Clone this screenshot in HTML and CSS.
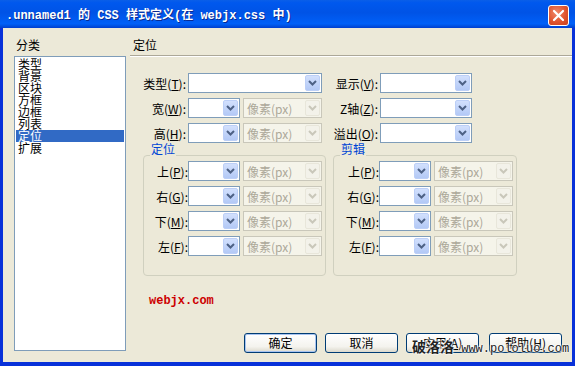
FILE: index.html
```html
<!DOCTYPE html>
<html lang="zh-CN">
<head>
    <meta charset="UTF-8">
    <title>CSS 样式定义</title>
    <link rel="stylesheet" href="styles.css">
</head>
<body>
<div class="window">
    <div class="titlebar">
        <span class="title">.unnamed1 的 CSS 样式定义(在 webjx.css 中)</span>
        <span class="close">
            <svg width="13" height="13" viewBox="0 0 13 13"><path d="M2 2 L11 11 M11 2 L2 11" stroke="#fff" stroke-width="2.2" stroke-linecap="round"/></svg>
        </span>
    </div>
    <div class="client">
        <div class="cat">
            <div class="cat-label">分类</div>
            <ul class="list">
                <li>类型</li>
                <li>背景</li>
                <li>区块</li>
                <li>方框</li>
                <li>边框</li>
                <li>列表</li>
                <li class="sel">定位</li>
                <li>扩展</li>
            </ul>
        </div>
        <div class="panel">
            <div class="panel-head">定位</div>

            <div class="rows">
                <div class="row">
                    <label class="lbl">类型(<u>T</u>):</label>
                    <div class="select wide"><span class="arrow"><svg width="9" height="6" viewBox="0 0 9 6"><path d="M1 1 L4.5 4.5 L8 1" fill="none" stroke="#4d6185" stroke-width="2"/></svg></span></div>
                    <label class="lbl lbl-r">显示(<u>V</u>):</label>
                    <div class="select right"><span class="arrow"><svg width="9" height="6" viewBox="0 0 9 6"><path d="M1 1 L4.5 4.5 L8 1" fill="none" stroke="#4d6185" stroke-width="2"/></svg></span></div>
                </div>
                <div class="row">
                    <label class="lbl">宽(<u>W</u>):</label>
                    <div class="select small"><span class="arrow"><svg width="9" height="6" viewBox="0 0 9 6"><path d="M1 1 L4.5 4.5 L8 1" fill="none" stroke="#4d6185" stroke-width="2"/></svg></span></div>
                    <div class="select unit off"><span class="val">像素(px)</span><span class="arrow"><svg width="9" height="6" viewBox="0 0 9 6"><path d="M1 1 L4.5 4.5 L8 1" fill="none" stroke="#c9c7ba" stroke-width="2"/></svg></span></div>
                    <label class="lbl lbl-r">Z轴(<u>Z</u>):</label>
                    <div class="select right"><span class="arrow"><svg width="9" height="6" viewBox="0 0 9 6"><path d="M1 1 L4.5 4.5 L8 1" fill="none" stroke="#4d6185" stroke-width="2"/></svg></span></div>
                </div>
                <div class="row">
                    <label class="lbl">高(<u>H</u>):</label>
                    <div class="select small"><span class="arrow"><svg width="9" height="6" viewBox="0 0 9 6"><path d="M1 1 L4.5 4.5 L8 1" fill="none" stroke="#4d6185" stroke-width="2"/></svg></span></div>
                    <div class="select unit off"><span class="val">像素(px)</span><span class="arrow"><svg width="9" height="6" viewBox="0 0 9 6"><path d="M1 1 L4.5 4.5 L8 1" fill="none" stroke="#c9c7ba" stroke-width="2"/></svg></span></div>
                    <label class="lbl lbl-r">溢出(<u>O</u>):</label>
                    <div class="select right"><span class="arrow"><svg width="9" height="6" viewBox="0 0 9 6"><path d="M1 1 L4.5 4.5 L8 1" fill="none" stroke="#4d6185" stroke-width="2"/></svg></span></div>
                </div>
            </div>

            <div class="groups">
                <div class="group">
                    <span class="legend">定位</span>
                    <div class="grow"><label class="glbl">上(<u>P</u>):</label><div class="select small"><span class="arrow"><svg width="9" height="6" viewBox="0 0 9 6"><path d="M1 1 L4.5 4.5 L8 1" fill="none" stroke="#4d6185" stroke-width="2"/></svg></span></div><div class="select unit off"><span class="val">像素(px)</span><span class="arrow"><svg width="9" height="6" viewBox="0 0 9 6"><path d="M1 1 L4.5 4.5 L8 1" fill="none" stroke="#c9c7ba" stroke-width="2"/></svg></span></div></div>
                    <div class="grow"><label class="glbl">右(<u>G</u>):</label><div class="select small"><span class="arrow"><svg width="9" height="6" viewBox="0 0 9 6"><path d="M1 1 L4.5 4.5 L8 1" fill="none" stroke="#4d6185" stroke-width="2"/></svg></span></div><div class="select unit off"><span class="val">像素(px)</span><span class="arrow"><svg width="9" height="6" viewBox="0 0 9 6"><path d="M1 1 L4.5 4.5 L8 1" fill="none" stroke="#c9c7ba" stroke-width="2"/></svg></span></div></div>
                    <div class="grow"><label class="glbl">下(<u>M</u>):</label><div class="select small"><span class="arrow"><svg width="9" height="6" viewBox="0 0 9 6"><path d="M1 1 L4.5 4.5 L8 1" fill="none" stroke="#4d6185" stroke-width="2"/></svg></span></div><div class="select unit off"><span class="val">像素(px)</span><span class="arrow"><svg width="9" height="6" viewBox="0 0 9 6"><path d="M1 1 L4.5 4.5 L8 1" fill="none" stroke="#c9c7ba" stroke-width="2"/></svg></span></div></div>
                    <div class="grow"><label class="glbl">左(<u>F</u>):</label><div class="select small"><span class="arrow"><svg width="9" height="6" viewBox="0 0 9 6"><path d="M1 1 L4.5 4.5 L8 1" fill="none" stroke="#4d6185" stroke-width="2"/></svg></span></div><div class="select unit off"><span class="val">像素(px)</span><span class="arrow"><svg width="9" height="6" viewBox="0 0 9 6"><path d="M1 1 L4.5 4.5 L8 1" fill="none" stroke="#c9c7ba" stroke-width="2"/></svg></span></div></div>
                </div>
                <div class="group g2">
                    <span class="legend">剪辑</span>
                    <div class="grow"><label class="glbl">上(<u>P</u>):</label><div class="select small"><span class="arrow"><svg width="9" height="6" viewBox="0 0 9 6"><path d="M1 1 L4.5 4.5 L8 1" fill="none" stroke="#4d6185" stroke-width="2"/></svg></span></div><div class="select unit off"><span class="val">像素(px)</span><span class="arrow"><svg width="9" height="6" viewBox="0 0 9 6"><path d="M1 1 L4.5 4.5 L8 1" fill="none" stroke="#c9c7ba" stroke-width="2"/></svg></span></div></div>
                    <div class="grow"><label class="glbl">右(<u>G</u>):</label><div class="select small"><span class="arrow"><svg width="9" height="6" viewBox="0 0 9 6"><path d="M1 1 L4.5 4.5 L8 1" fill="none" stroke="#4d6185" stroke-width="2"/></svg></span></div><div class="select unit off"><span class="val">像素(px)</span><span class="arrow"><svg width="9" height="6" viewBox="0 0 9 6"><path d="M1 1 L4.5 4.5 L8 1" fill="none" stroke="#c9c7ba" stroke-width="2"/></svg></span></div></div>
                    <div class="grow"><label class="glbl">下(<u>M</u>):</label><div class="select small"><span class="arrow"><svg width="9" height="6" viewBox="0 0 9 6"><path d="M1 1 L4.5 4.5 L8 1" fill="none" stroke="#4d6185" stroke-width="2"/></svg></span></div><div class="select unit off"><span class="val">像素(px)</span><span class="arrow"><svg width="9" height="6" viewBox="0 0 9 6"><path d="M1 1 L4.5 4.5 L8 1" fill="none" stroke="#c9c7ba" stroke-width="2"/></svg></span></div></div>
                    <div class="grow"><label class="glbl">左(<u>F</u>):</label><div class="select small"><span class="arrow"><svg width="9" height="6" viewBox="0 0 9 6"><path d="M1 1 L4.5 4.5 L8 1" fill="none" stroke="#4d6185" stroke-width="2"/></svg></span></div><div class="select unit off"><span class="val">像素(px)</span><span class="arrow"><svg width="9" height="6" viewBox="0 0 9 6"><path d="M1 1 L4.5 4.5 L8 1" fill="none" stroke="#c9c7ba" stroke-width="2"/></svg></span></div></div>
                </div>
            </div>

            <div class="brand">webjx.com</div>

            <div class="buttons">
                <button class="btn default">确定</button>
                <button class="btn">取消</button>
                <button class="btn">应用(<u>A</u>)</button>
                <button class="btn last">帮助(<u>H</u>)</button>
            </div>
        </div>
    </div>
    <div class="watermark"><b>破洛洛</b> www.pololuo.com</div>
</div>
</body>
</html>
```

FILE: styles.css
```css
body {
    margin: 0;
    font-family: "Noto Sans CJK SC", "Liberation Sans", sans-serif;
    font-size: 12px;
    color: #000;
    background: #fff;
}
.window {
    position: relative;
    width: 575px;
    height: 366px;
    background: #0831d9;
    overflow: hidden;
}
.titlebar {
    height: 28px;
    display: flex;
    align-items: center;
    justify-content: space-between;
    padding: 0 6px;
    box-sizing: border-box;
    background: linear-gradient(#0a5fe8 0, #0058ee 10%, #0053e6 45%, #0060f8 85%, #0050e0 93%, #003ed0 100%);
}
.title {
    color: #fff;
    font-family: "Liberation Mono", "Noto Sans CJK SC", monospace;
    font-weight: bold;
    font-size: 12px;
    text-shadow: 1px 1px 0 #0a2a90;
    white-space: pre;
}
.close {
    width: 19px;
    height: 19px;
    border: 1px solid #fff;
    border-radius: 3px;
    background: radial-gradient(circle at 40% 35%, #f08a6c 0, #e0542e 55%, #c8401c 100%);
    display: flex;
    align-items: center;
    justify-content: center;
    margin-top: 2px;
}
.client {
    position: absolute;
    left: 3px;
    top: 28px;
    width: 569px;
    height: 334px;
    background: #ece9d8;
    display: flex;
}
.cat {
    margin-left: 11px;
    width: 112px;
}
.cat-label {
    padding: 11px 0 0 2px;
    line-height: 12px;
    height: 12px;
    margin-bottom: 5px;
}
.list {
    list-style: none;
    margin: 0;
    padding: 1px 1px 0;
    height: 292px;
    border: 1px solid #7f9db9;
    background: #fff;
}
.list li {
    line-height: 12px;
    height: 12px;
    padding-left: 2px;
}
.list li.sel {
    background: #316ac5;
    color: #fff;
}
.panel {
    margin-left: 4px;
    flex: 1;
}
.panel-head {
    padding: 11px 0 4px 3px;
    line-height: 12px;
    border-bottom: 1px solid #aca899;
    box-shadow: 0 1px 0 #fff;
}
.rows {
    margin-top: 17px;
    display: flex;
    flex-direction: column;
    gap: 5px;
}
.row {
    display: flex;
    align-items: center;
    height: 20px;
}
.lbl {
    width: 56px;
    padding-right: 2px;
    text-align: right;
    white-space: nowrap;
}
.lbl-r {
    width: 55px;
    margin-left: 1px;
}
.select {
    height: 20px;
    box-sizing: border-box;
    border: 1px solid #7f9db9;
    background: #fff;
    display: flex;
    align-items: center;
    justify-content: space-between;
}
.select.wide { width: 134px; justify-content: flex-end; }
.select.right { width: 92px; justify-content: flex-end; }
.select.small { width: 52px; justify-content: flex-end; }
.select.unit { width: 79px; margin-left: 3px; }
.arrow {
    width: 15px;
    height: 16px;
    margin: 0 1px;
    border-radius: 2px;
    background: linear-gradient(#d2e0fd, #b3c9f6);
    border: 1px solid #bccff7;
    box-sizing: border-box;
    display: flex;
    align-items: center;
    justify-content: center;
}
.select.off {
    border-color: #c9c7ba;
    background: #f5f4ea;
}
.select.off .arrow {
    background: #f3f2ea;
    border-color: #e8e6da;
}
.val {
    color: #aca899;
    padding-left: 3px;
    white-space: nowrap;
}
.groups {
    display: flex;
    gap: 7px;
    margin: 12px 0 0 13px;
}
.group {
    position: relative;
    width: 183px;
    height: 121px;
    box-sizing: border-box;
    border: 1px solid #d0d0bf;
    border-radius: 4px;
    padding-top: 5px;
    display: flex;
    flex-direction: column;
    gap: 5px;
}
.group.g2 {
    width: 184px;
}
.legend {
    position: absolute;
    left: 6px;
    top: -14px;
    padding: 0 1px;
    line-height: 14px;
    color: #0046d5;
    background: #ece9d8;
}
.grow {
    display: flex;
    align-items: center;
    height: 20px;
}
.glbl {
    width: 44px;
    text-align: right;
    white-space: nowrap;
}
.g2 .glbl {
    width: 45px;
}
.brand {
    margin: 19px 0 0 19px;
    line-height: 12px;
    color: #cc0000;
    font-family: "Liberation Mono", monospace;
    font-weight: bold;
    font-size: 12px;
}
.buttons {
    display: flex;
    justify-content: flex-end;
    gap: 8px;
    margin-top: 26px;
    padding-right: 10px;
}
.btn {
    width: 73px;
    height: 20px;
    padding: 0;
    font-family: "Noto Sans CJK SC", sans-serif;
    font-size: 12px;
    line-height: 16px;
    border: 1px solid #003c74;
    border-radius: 3px;
    background: linear-gradient(#ffffff, #f4f3ee 70%, #dcd9cc);
    color: #000;
}
.btn.default {
    box-shadow: inset 0 0 0 1px #a8c4f0;
}
.btn.last {
    margin-left: 2px;
}
.watermark {
    position: absolute;
    left: 412px;
    top: 336px;
    font-family: "Liberation Mono", monospace;
    font-size: 12px;
    color: #222;
    white-space: pre;
    text-shadow: 0 0 2px #fff, 0 0 2px #fff, 0 0 2px #fff;
}
.watermark b {
    font-family: "Noto Sans CJK SC", sans-serif;
    font-size: 14px;
}
```
